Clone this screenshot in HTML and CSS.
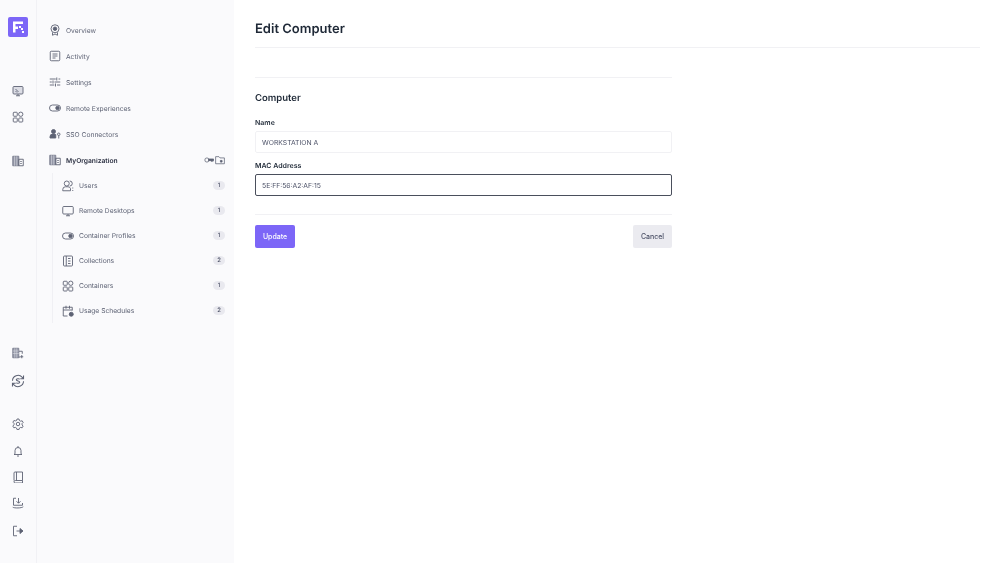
FILE: index.html
```html
<!DOCTYPE html>
<html lang="en">

<head>
    <meta charset="UTF-8">
    <meta name="viewport" content="width=device-width, initial-scale=1.0">
    <title>Edit Computer</title>
    <link rel="stylesheet" href="styles.css">
</head>

<body>
    <svg class="defs" width="0" height="0">
        <symbol id="i-desktop" viewBox="0 0 24 24"><rect class="tint" x="2" y="3" width="20" height="15" rx="2"/><path d="M8 21.500h8M12 18v3.500M7 8l6 6M7 12l3 3"/></symbol>
        <symbol id="i-monitor" viewBox="0 0 24 24"><rect x="1.500" y="3" width="21" height="15" rx="2"/><path d="M8 21.500h8M12 18v3.500"/></symbol>
        <symbol id="i-apps" viewBox="0 0 24 24"><rect x="2.500" y="2.500" width="8" height="8" rx="1.500"/><circle cx="17.500" cy="6.500" r="4.300"/><rect x="2.500" y="14" width="8" height="8" rx="1.500"/><rect x="13.500" y="14" width="8" height="8" rx="1.500"/></symbol>
        <symbol id="i-org" viewBox="0 0 24 24"><path class="block" d="M1.500 2.500h12v19h-12z"/><path class="thin" d="M5 2.500v19M9.500 2.500v19"/><path d="M13.500 8.500h9v13h-9zM16.500 13h3M16.500 17h3"/></symbol>
        <symbol id="i-org-add" viewBox="0 0 24 24"><path class="block" d="M1.500 2.500h12v19h-12z"/><path class="thin" d="M1.500 8h12M1.500 13h12M5.500 2.500v19M9.500 2.500v19"/><path d="M13.500 8.500h7v5M13.500 20h3M19.500 16v6.500M16.500 19.500h6"/></symbol>
        <symbol id="i-sync" viewBox="0 0 24 24"><path d="M2.500 11.500a9.500 9.500 0 0 1 16.500-6L21.500 8M21.500 12.500a9.500 9.500 0 0 1-16.500 6L2.500 16M21.500 2.500v5.500h-5.500M2.500 21.500V16H8"/><path d="M15 9c-1-1.300-6-1.300-6 1s6 1.700 6 4-5 2.300-6 1"/></symbol>
        <symbol id="i-gear" viewBox="0 0 24 24"><path d="M10 2h4l.8 3 2.500 1.400 3-.8 2 3.400-2.200 2.200v2.800l2.200 2.200-2 3.400-3-.8-2.500 1.400-.8 3h-4l-.8-3-2.500-1.400-3 .8-2-3.400L4 13.400v-2.800L1.800 8.400l2-3.400 3 .8L9.200 5z"/><circle cx="12" cy="12" r="3.500"/></symbol>
        <symbol id="i-bell" viewBox="0 0 24 24"><path d="M6 17.500V11a6 6 0 0 1 12 0v6.500l2 1.500H4zM10 22h4M12 5V2"/></symbol>
        <symbol id="i-book" viewBox="0 0 24 24"><path d="M4 19V4a2 2 0 0 1 2-2h15v17H6.500a2.500 2.500 0 0 0 0 5H21v-5M9 2v17"/></symbol>
        <symbol id="i-install" viewBox="0 0 24 24"><path d="M8 2.500H3v14h18V12M13 2v10M9 8.500l4 4 4-4M1.500 20.500c3 2 18 2 21-1"/></symbol>
        <symbol id="i-logout" viewBox="0 0 24 24"><path d="M10 2.500H3v19h7M9 12h12"/><path class="fill" d="M16 7l6 5-6 5z"/></symbol>
        <symbol id="i-badge" viewBox="0 0 24 24"><circle cx="12" cy="9.500" r="8"/><circle class="fill" cx="12" cy="9.500" r="3.500"/><path d="M7 17v5.500l5-2.500 5 2.500V17"/></symbol>
        <symbol id="i-list" viewBox="0 0 24 24"><rect x="2.500" y="2.500" width="19" height="19" rx="2"/><path d="M7 8h10M7 12h10M7 16h6"/></symbol>
        <symbol id="i-sliders" viewBox="0 0 24 24"><path d="M1.500 6h12M19 6h3.500M1.500 12h4M11 12h11.500M1.500 18h9M16 18h6.500M15.500 3v6M8 9v6M13 15v6"/></symbol>
        <symbol id="i-toggle" viewBox="0 0 24 24"><rect x="1" y="6" width="22" height="12" rx="6"/><circle class="fill" cx="17" cy="12" r="3.500"/></symbol>
        <symbol id="i-sso" viewBox="0 0 24 24"><circle class="fill" cx="9" cy="7" r="4"/><path class="fill" d="M2 20v-2.500a5.500 5.500 0 0 1 5.500-5.500h3a6 6 0 0 1 3 1V20z"/><circle cx="19.500" cy="12.500" r="2.500"/><path d="M19.500 15v6"/></symbol>
        <symbol id="i-key" viewBox="0 0 24 24"><circle cx="7" cy="12" r="5"/><path class="fill" d="M11 9.500h12v4l-2 2-1.500-2-2 2-1.500-2h-5z"/></symbol>
        <symbol id="i-folder" viewBox="0 0 24 24"><path d="M1.500 4h8l2.500 3h10.500v14h-21z"/><path class="fill" d="M13 13h4v4h-4z"/></symbol>
        <symbol id="i-users" viewBox="0 0 24 24"><circle cx="9.500" cy="7" r="5"/><path d="M1.500 21.500v-2.500a5.500 5.500 0 0 1 5.500-5.500h5a5.500 5.500 0 0 1 5 3.500v4.500zM15.500 2a5 5 0 0 1 0 10M21.500 15v2M21.500 20v2"/></symbol>
        <symbol id="i-collection" viewBox="0 0 24 24"><rect x="3" y="2" width="18" height="20" rx="2"/><path d="M8.500 2v20M12 7h5M12 12h5M12 17h5"/></symbol>
        <symbol id="i-calendar" viewBox="0 0 24 24"><path d="M11 22H2.500V4.500h18V11M2.500 10h18M8 1.500v6M15 1.500v6"/><circle class="fill" cx="18.500" cy="18.500" r="4"/></symbol>
    </svg>

    <div class="app">
        <nav class="rail">
            <div class="logo">
                <svg viewBox="0 0 20 20" width="20" height="20"><path d="M5 4.500h10V7H7.500v2.500H10V12H7.500v3.500H5zM11 9h2v2h-2zM13 11h2v2h-2zM14 14h2v2h-2z"/></svg>
            </div>
            <a class="rail-icon first"><svg><use href="#i-desktop"/></svg></a>
            <a class="rail-icon"><svg><use href="#i-apps"/></svg></a>
            <a class="rail-icon gap"><svg><use href="#i-org"/></svg></a>
            <a class="rail-icon push"><svg><use href="#i-org-add"/></svg></a>
            <a class="rail-icon near"><svg class="big"><use href="#i-sync"/></svg></a>
            <a class="rail-icon mid"><svg><use href="#i-gear"/></svg></a>
            <a class="rail-icon bell"><svg><use href="#i-bell"/></svg></a>
            <a class="rail-icon"><svg><use href="#i-book"/></svg></a>
            <a class="rail-icon"><svg><use href="#i-install"/></svg></a>
            <a class="rail-icon near"><svg><use href="#i-logout"/></svg></a>
        </nav>

        <aside class="sidebar">
            <a class="item"><svg><use href="#i-badge"/></svg><span>Overview</span></a>
            <a class="item"><svg><use href="#i-list"/></svg><span>Activity</span></a>
            <a class="item"><svg><use href="#i-sliders"/></svg><span>Settings</span></a>
            <a class="item"><svg><use href="#i-toggle"/></svg><span>Remote Experiences</span></a>
            <a class="item"><svg><use href="#i-sso"/></svg><span>SSO Connectors</span></a>
            <a class="item org">
                <svg><use href="#i-org"/></svg><span>MyOrganization</span>
                <svg class="tool"><use href="#i-key"/></svg>
                <svg class="tool"><use href="#i-folder"/></svg>
            </a>
            <div class="subnav">
                <a class="subitem"><svg><use href="#i-users"/></svg><span>Users</span><b class="count">1</b></a>
                <a class="subitem"><svg><use href="#i-monitor"/></svg><span>Remote Desktops</span><b class="count">1</b></a>
                <a class="subitem"><svg><use href="#i-toggle"/></svg><span>Container Profiles</span><b class="count">1</b></a>
                <a class="subitem"><svg><use href="#i-collection"/></svg><span>Collections</span><b class="count">2</b></a>
                <a class="subitem"><svg><use href="#i-apps"/></svg><span>Containers</span><b class="count">1</b></a>
                <a class="subitem"><svg><use href="#i-calendar"/></svg><span>Usage Schedules</span><b class="count">2</b></a>
            </div>
        </aside>

        <main class="main">
            <h1>Edit Computer</h1>
            <form class="form" action="#">
                <h2>Computer</h2>
                <label for="name">Name</label>
                <input type="text" id="name" value="WORKSTATION A">
                <label for="mac">MAC Address</label>
                <input type="text" id="mac" class="focus" value="5E:FF:56:A2:AF:15">
                <div class="actions">
                    <button type="submit" class="update">Update</button>
                    <button type="button" class="cancel">Cancel</button>
                </div>
            </form>
        </main>
    </div>
</body>

</html>
```

FILE: styles.css
```css
* {
    padding: 0;
    margin: 0;
    box-sizing: border-box;
}

html,
body {
    height: 100%;
    overflow: hidden;
}

body {
    font-family: Inter, "Liberation Sans", sans-serif;
    color: #1f2937;
    background-color: white;
    text-rendering: geometricPrecision;
}

.defs {
    position: absolute;
}

svg {
    fill: none;
    stroke: #5d6274;
    stroke-width: 1.8;
}

.fill {
    fill: #5d6274;
}

.tint {
    fill: #dcdde5;
}

.block {
    fill: #9598a8;
    stroke: #7a7d8f;
}

.thin {
    stroke: #e3e4ea;
    stroke-width: 1;
}

.app {
    display: flex;
    height: 563px;
    will-change: transform;
}

.rail {
    display: flex;
    flex-direction: column;
    align-items: center;
    flex: none;
    width: 37px;
    padding-top: 17px;
    background-color: #fafafc;
    border-right: 1px solid #f1f1f5;
}

.logo {
    width: 20px;
    height: 20px;
    margin-left: -1px;
    background-color: #7c66f7;
    border-radius: 2px;
}

.logo svg {
    display: block;
    fill: white;
    stroke: none;
}

.rail-icon {
    display: flex;
    align-items: center;
    justify-content: center;
    width: 26px;
    height: 26px;
    margin-left: -1px;
}

.rail-icon svg {
    width: 12px;
    height: 12px;
}

.rail-icon svg.big {
    width: 14px;
    height: 14px;
}

.first {
    margin-top: 41px;
}

.gap {
    margin-top: 18px;
}

.push {
    margin-top: 166px;
}

.near {
    margin-top: 2px;
}

.mid {
    margin-top: 17px;
}

.bell {
    margin-top: 1px;
}

.sidebar {
    flex: none;
    width: 197px;
    padding: 17px 9px 0 11px;
    background-color: #fafafc;
}

.item {
    display: flex;
    align-items: center;
    height: 26px;
    font-size: 6.7px;
    color: #5d6274;
}

.item span {
    padding-top: 1px;
}

.item svg {
    flex: none;
    width: 12px;
    height: 12px;
    margin-left: 1px;
    margin-right: 5px;
}

.org {
    font-weight: 600;
    color: #2b3042;
}

.org span {
    flex: 1;
}

.item .tool {
    width: 10px;
    height: 10px;
    margin: 0 0 0 1px;
}

.subnav {
    margin-left: 4px;
    padding-left: 8px;
    border-left: 1px solid #f0f0f4;
}

.subitem {
    display: flex;
    align-items: center;
    height: 25px;
    font-size: 6.7px;
    color: #5d6274;
}

.subitem svg {
    flex: none;
    width: 12px;
    height: 12px;
    margin-left: 1px;
    margin-right: 5px;
}

.subitem span {
    flex: 1;
}

.count {
    min-width: 12px;
    height: 9px;
    padding: 0 3px;
    font-size: 6px;
    line-height: 9px;
    font-weight: 500;
    text-align: center;
    color: #4b5066;
    background-color: #e9e9ef;
    border-radius: 5px;
}

.main {
    flex: 1;
    padding: 21px 20px 0 21px;
}

h1 {
    height: 27px;
    font-size: 13px;
    line-height: 17px;
    font-weight: 600;
    border-bottom: 1px solid #f1f1f4;
    margin-bottom: 29px;
}

.form {
    display: flex;
    flex-direction: column;
    width: 417px;
    padding-top: 14px;
    border-top: 1px solid #f1f1f4;
}

h2 {
    font-size: 9.5px;
    line-height: 13px;
    font-weight: 600;
    margin-bottom: 13px;
}

label {
    font-size: 7px;
    line-height: 9px;
    font-weight: 600;
    margin-bottom: 4px;
}

input {
    width: 100%;
    height: 22px;
    padding-left: 6px;
    margin-bottom: 9px;
    font-family: inherit;
    font-size: 6.8px;
    color: #4b5066;
    background-color: white;
    border: 1px solid #f1f1f4;
    border-radius: 2px;
    outline: none;
}

#name {
    margin-bottom: 8px;
}

input.focus {
    border-color: #4a4f5c;
}

.actions {
    display: flex;
    justify-content: space-between;
    margin-top: 9px;
    padding-top: 10px;
    border-top: 1px solid #f1f1f4;
}

button {
    height: 23px;
    font-family: inherit;
    font-size: 7px;
    font-weight: 500;
    border: none;
    border-radius: 2px;
    cursor: pointer;
}

.update {
    width: 40px;
    color: white;
    background-color: #7c66f7;
}

.cancel {
    width: 39px;
    color: #4b5066;
    background-color: #ebebf0;
}
```
